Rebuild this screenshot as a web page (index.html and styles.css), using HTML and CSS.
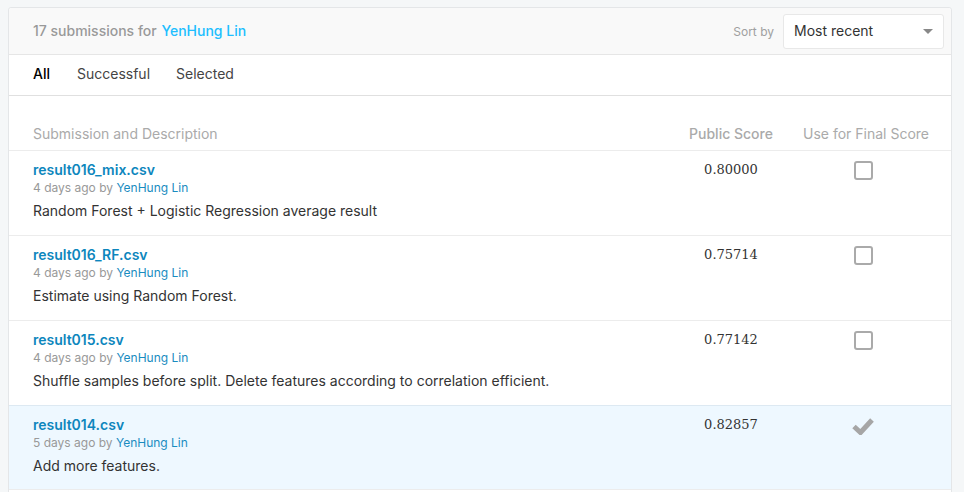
FILE: index.html
```html
<!DOCTYPE html>
<html>
<head>
<meta charset="utf-8">
<link rel="stylesheet" href="styles.css">
</head>
<body>
<div class="card">
  <div class="card-head">
    <div class="count">17 submissions for <a class="user">YenHung Lin</a></div>
    <div class="sort">
      <span class="sort-label">Sort by</span>
      <div class="select"><span>Most recent</span><span class="caret"></span></div>
    </div>
  </div>
  <div class="tabs">
    <span class="tab active">All</span>
    <span class="tab">Successful</span>
    <span class="tab">Selected</span>
  </div>
  <div class="table">
    <div class="thead">
      <div class="c-desc">Submission and Description</div>
      <div class="c-score">Public Score</div>
      <div class="c-final">Use for Final Score</div>
    </div>
    <div class="row">
      <div class="c-desc">
        <div class="fname">result016_mix.csv</div>
        <div class="meta">4 days ago by <a>YenHung Lin</a></div>
        <div class="desc">Random Forest + Logistic Regression average result</div>
      </div>
      <div class="c-score score">0.80000</div>
      <div class="c-final"><span class="box"></span></div>
    </div>
    <div class="row">
      <div class="c-desc">
        <div class="fname">result016_RF.csv</div>
        <div class="meta">4 days ago by <a>YenHung Lin</a></div>
        <div class="desc">Estimate using Random Forest.</div>
      </div>
      <div class="c-score score">0.75714</div>
      <div class="c-final"><span class="box"></span></div>
    </div>
    <div class="row">
      <div class="c-desc">
        <div class="fname">result015.csv</div>
        <div class="meta">4 days ago by <a>YenHung Lin</a></div>
        <div class="desc">Shuffle samples before split. Delete features according to correlation efficient.</div>
      </div>
      <div class="c-score score">0.77142</div>
      <div class="c-final"><span class="box"></span></div>
    </div>
    <div class="row selected">
      <div class="c-desc">
        <div class="fname">result014.csv</div>
        <div class="meta">5 days ago by <a>YenHung Lin</a></div>
        <div class="desc">Add more features.</div>
      </div>
      <div class="c-score score">0.82857</div>
      <div class="c-final">
        <svg class="check" width="22" height="19" viewBox="0 0 22 19"><path d="M2 10.5 L8.5 16.5 L20 4" fill="none" stroke="#a6a6a6" stroke-width="5" stroke-linejoin="miter"/></svg>
      </div>
    </div>
  </div>
</div>
</body>
</html>
```
FILE: styles.css
```css
* { box-sizing: border-box; }
html, body { margin: 0; padding: 0; }
body {
  background: #f5f7f8;
  font-family: Inter, Roboto, "Noto Sans", sans-serif;
  font-size: 14px;
  color: #333;
  padding: 7px 12px 0 8px;
  height: 492px;
  overflow: hidden;
}
a { text-decoration: none; }
.card {
  background: #fff;
  border: 1px solid #e4e6e8;
  border-radius: 3px;
  height: 600px;
}
.card-head {
  height: 47px;
  background: #f9f9f9;
  border-bottom: 1px solid #e6e6e6;
  display: flex;
  align-items: center;
  justify-content: space-between;
  padding: 0 7px 2px 24px;
  border-radius: 3px 3px 0 0;
}
.count { color: #999; font-size: 14px; font-weight: 500; }
.count .user { color: #20beff; margin-left: 1px; }
.sort { display: flex; align-items: center; gap: 9px; padding-top: 2px; }
.sort-label { color: #a0a0a0; font-size: 12px; }
.select {
  width: 161px;
  height: 35px;
  background: #fff;
  border: 1px solid #e8e8e8;
  border-radius: 3px;
  display: flex;
  align-items: center;
  justify-content: space-between;
  padding: 0 10px 2px 10px;
  font-size: 14px;
  color: #333;
}
.caret {
  width: 0; height: 0;
  border-left: 5px solid transparent;
  border-right: 5px solid transparent;
  border-top: 5px solid #888;
  margin-top: 2px;
}
.tabs {
  height: 41px;
  border-bottom: 1px solid #e0e0e0;
  display: flex;
  align-items: center;
  padding: 0 24px 3px 24px;
  gap: 26px;
}
.tab { color: #444; font-size: 14px; }
.tab:nth-child(2) { margin-left: 1px; }
.tab.active { color: #000; font-weight: 500; }
.thead {
  display: flex;
  align-items: center;
  height: 55px;
  padding-top: 21px;
  border-bottom: 1px solid #ececec;
  color: #aaa;
  font-size: 14px;
}
.thead .c-score { font-weight: 500; }
.c-desc { flex: 1; padding-left: 24px; }
.c-score { width: 100px; text-align: center; margin-right: 15px; }
.c-final { width: 140px; margin-right: 15px; display: flex; justify-content: center; }
.row {
  display: flex;
  height: 85px;
  border-bottom: 1px solid #ececec;
  padding-top: 10px;
}
.row.selected { background: #eef8ff; border-top: 1px solid #dde9f2; margin-top: -1px; }
.fname { color: #0d86bd; font-weight: 600; font-size: 14px; line-height: 18px; }
.meta { color: #999; font-size: 12px; line-height: 18px; }
.meta a { color: #1a8cbf; }
.desc { color: #333; font-size: 14px; line-height: 20px; margin-top: 4px; }
.score { font-family: "DejaVu Serif", serif; font-size: 13px; color: #333; line-height: 18px; }
.row .c-final { padding-top: 0; padding-right: 6px; }
.box {
  width: 19px; height: 19px;
  border: 2px solid #aaa;
  border-radius: 3px;
  display: block;
}
.check { display: block; margin-top: 0; }
```
